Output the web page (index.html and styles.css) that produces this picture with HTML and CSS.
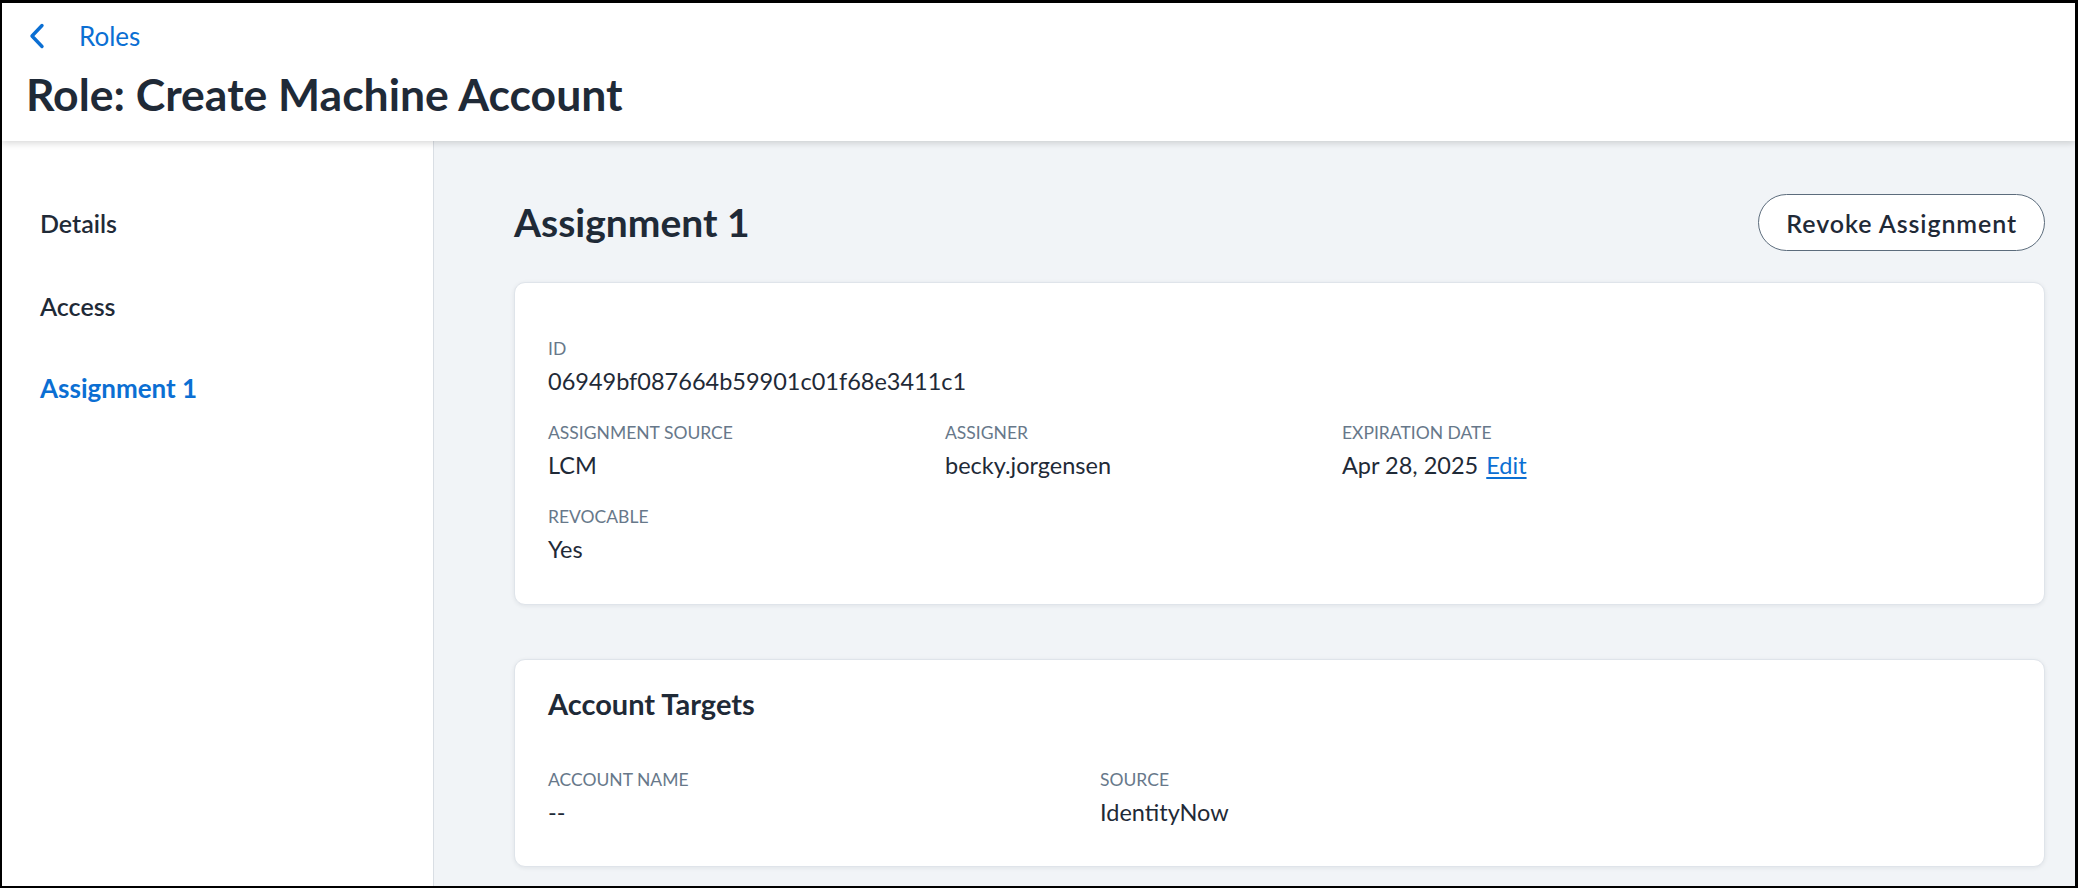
FILE: index.html
```html
<!DOCTYPE html>
<html lang="en">
<head>
    <meta charset="UTF-8">
    <meta name="viewport" content="width=device-width, initial-scale=1.0">
    <title>Role: Create Machine Account</title>
    <link rel="stylesheet" href="styles.css">
</head>
<body>
    <div class="frame">
        <header class="topbar">
            <a class="back" href="#">
                <svg class="chevron" width="18" height="26" viewBox="0 0 18 26">
                    <polyline points="14,2.5 4,13 14,23.5" fill="none" stroke="#0b6fd3" stroke-width="3.4" stroke-linecap="round" stroke-linejoin="round"/>
                </svg>
                <span>Roles</span>
            </a>
            <h1>Role: Create Machine Account</h1>
        </header>

        <div class="layout">
            <nav class="sidebar">
                <a href="#">Details</a>
                <a href="#">Access</a>
                <a href="#" class="active">Assignment 1</a>
            </nav>

            <main class="content">
                <div class="content-head">
                    <h2>Assignment 1</h2>
                    <button class="btn-outline">Revoke Assignment</button>
                </div>

                <section class="card">
                    <div class="field">
                        <div class="label">ID</div>
                        <div class="value">06949bf087664b59901c01f68e3411c1</div>
                    </div>
                    <div class="row">
                        <div class="field col">
                            <div class="label">Assignment Source</div>
                            <div class="value">LCM</div>
                        </div>
                        <div class="field col">
                            <div class="label">Assigner</div>
                            <div class="value">becky.jorgensen</div>
                        </div>
                        <div class="field col">
                            <div class="label">Expiration Date</div>
                            <div class="value">Apr 28, 2025 <a href="#" class="edit">Edit</a></div>
                        </div>
                    </div>
                    <div class="field">
                        <div class="label">Revocable</div>
                        <div class="value">Yes</div>
                    </div>
                </section>

                <section class="card targets">
                    <h3>Account Targets</h3>
                    <div class="row">
                        <div class="field col-wide">
                            <div class="label">Account Name</div>
                            <div class="value">--</div>
                        </div>
                        <div class="field">
                            <div class="label">Source</div>
                            <div class="value">IdentityNow</div>
                        </div>
                    </div>
                </section>
            </main>
        </div>
    </div>
</body>
</html>
```

FILE: styles.css
```css
* {
    box-sizing: border-box;
}

html, body {
    margin: 0;
    padding: 0;
}

body {
    font-family: "Lato", "Noto Sans", sans-serif;
    color: #1f2a37;
    background: #ffffff;
}

.frame {
    width: 2078px;
    height: 888px;
    border: 3px solid #000000;
    border-bottom-width: 2px;
    border-left-width: 2px;
    display: flex;
    flex-direction: column;
    overflow: hidden;
}

/* top bar */

.topbar {
    height: 138px;
    flex-shrink: 0;
    padding: 16px 24px 0 24px;
    background: #ffffff;
    box-shadow: 0 2px 7px rgba(0, 0, 0, 0.16);
    position: relative;
    z-index: 2;
}

.back {
    display: flex;
    align-items: center;
    height: 34px;
    color: #0b6fd3;
    text-decoration: none;
    font-size: 26px;
}

.chevron {
    margin-left: 2px;
    margin-right: 33px;
}

h1 {
    margin: 15px 0 0 0;
    font-size: 44.5px;
    line-height: 52px;
    font-weight: 700;
    color: #1f2a37;
}

/* main layout */

.layout {
    flex: 1;
    display: flex;
    min-height: 0;
}

.sidebar {
    width: 432px;
    flex-shrink: 0;
    background: #ffffff;
    border-right: 1px solid #d9dee4;
    padding: 62px 0 0 38px;
    display: flex;
    flex-direction: column;
    gap: 42.5px;
}

.sidebar a {
    display: block;
    height: 40px;
    line-height: 40px;
    font-size: 25px;
    font-weight: 600;
    color: #1f2a37;
    text-decoration: none;
}

.sidebar a.active {
    color: #0b6fd3;
    font-weight: 700;
    font-size: 26px;
}

.content {
    flex: 1;
    background: #f1f4f7;
    padding: 53px 30px 0 80px;
}

.content-head {
    display: flex;
    justify-content: space-between;
    align-items: center;
    height: 57px;
    margin-bottom: 31px;
}

h2 {
    margin: 0;
    padding-bottom: 2px;
    font-size: 39px;
    font-weight: 700;
    color: #1f2a37;
}

.btn-outline {
    height: 57px;
    padding: 0 27px;
    border: 1.5px solid #5c6c7c;
    border-radius: 29px;
    background: #ffffff;
    font-family: inherit;
    font-size: 25px;
    font-weight: 600;
    letter-spacing: 0.9px;
    color: #1f2a37;
}

/* cards */

.card {
    background: #ffffff;
    border: 1px solid #dfe4ea;
    border-radius: 11px;
    box-shadow: 0 1px 4px rgba(30, 42, 55, 0.08);
    padding: 54px 33px 39px 33px;
    display: flex;
    flex-direction: column;
    gap: 24px;
}

.card.targets {
    margin-top: 54px;
    padding-top: 27px;
    padding-bottom: 38px;
    gap: 47px;
}

h3 {
    margin: 0;
    font-size: 29px;
    line-height: 34px;
    font-weight: 700;
    color: #1f2a37;
}

.row {
    display: flex;
}

.col {
    width: 397px;
}

.col-wide {
    width: 552px;
}

.label {
    font-size: 17.5px;
    line-height: 24px;
    text-transform: uppercase;
    color: #67788a;
}

.value {
    margin-top: 4px;
    font-size: 23.5px;
    line-height: 32px;
    color: #1f2a37;
}

.edit {
    margin-left: 2px;
    color: #0b6fd3;
    text-decoration: underline;
    text-underline-offset: 3px;
}
```
